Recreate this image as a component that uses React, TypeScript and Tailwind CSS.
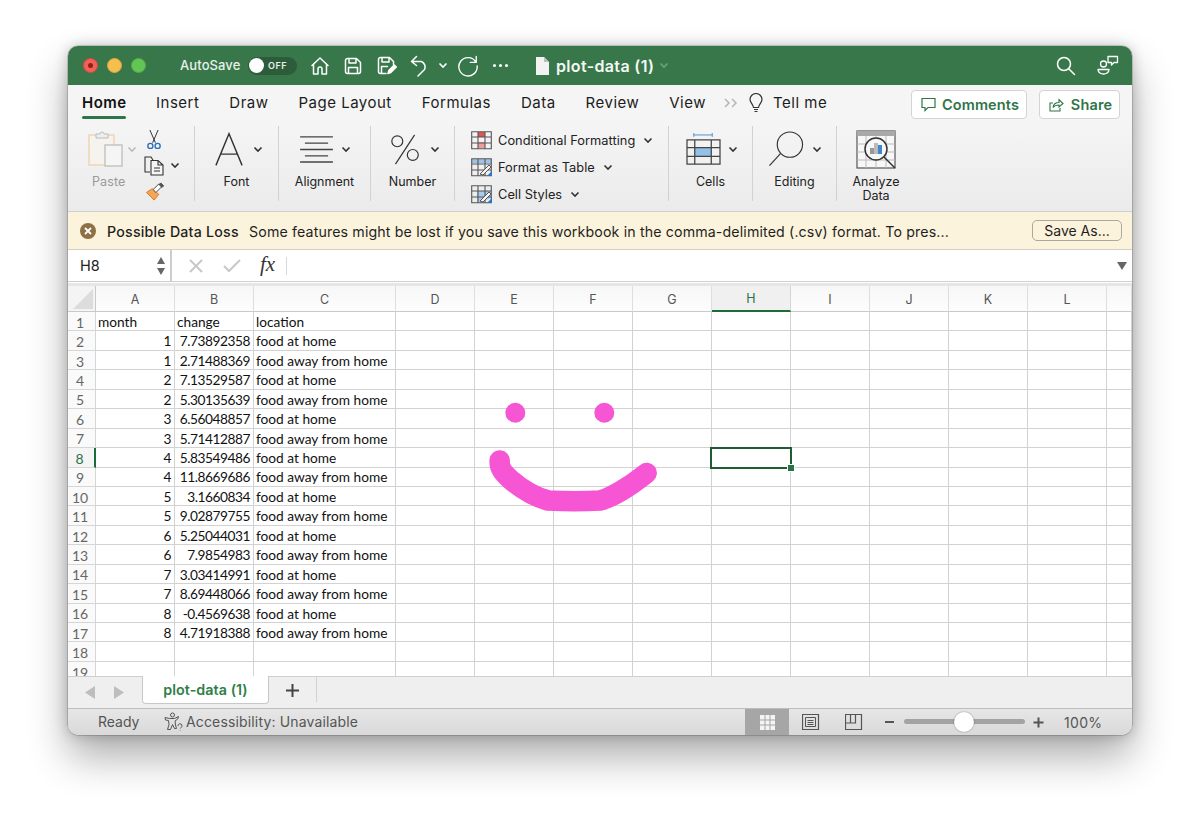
import React from "react";

const UI = "font-['Inter','Liberation_Sans',sans-serif]";
const CELL = "font-['Lato','Open_Sans',sans-serif]";

const Chev = ({ className = "", color = "#333" }: { className?: string; color?: string }) => (
  <svg width="10" height="7" viewBox="0 0 10 7" className={className} fill="none" stroke={color} strokeWidth="1.6">
    <path d="M1.5 1.5 5 5l3.5-3.5" />
  </svg>
);

const W = { fill: "none", stroke: "#fff", strokeWidth: 1.5, strokeLinejoin: "round" as const, strokeLinecap: "round" as const };

function TitleBar() {
  return (
    <div className="h-[39px] shrink-0 bg-[#38774a] flex items-center relative text-white">
      <div className="flex items-center gap-[9px] ml-[15px]">
        <span className="w-[15px] h-[15px] rounded-full bg-[#f2605a] border border-[#d9483f] flex items-center justify-center">
          <span className="w-[5px] h-[5px] rounded-full bg-[#8f1f1a]" />
        </span>
        <span className="w-[15px] h-[15px] rounded-full bg-[#f6bd4f] border border-[#dba53d]" />
        <span className="w-[15px] h-[15px] rounded-full bg-[#62c554] border border-[#52ad45]" />
      </div>
      <span className="ml-[34px] text-[13px] tracking-[0.1px] font-medium text-[#e8f0ea] w-[68px]">AutoSave</span>
      <div className="w-[49px] h-[18px] rounded-full bg-[#2c5c3a] flex items-center relative">
        <span className="w-[15px] h-[15px] ml-[1px] rounded-full bg-white" />
        <span className="ml-[4px] text-[9px] font-semibold tracking-[0.5px] text-[#e8f0ea]">OFF</span>
      </div>
      <svg width="20" height="20" viewBox="0 0 20 20" className="ml-[13px]" {...W}>
        <path d="M2 9.5 10 2l8 7.5M3.5 8.5V18h4.500v-5a2 2 0 0 1 4 0v5h4.500V8.500" />
      </svg>
      <svg width="18" height="18" viewBox="0 0 18 18" className="ml-[14px]" {...W}>
        <path d="M1.500 3.500a2 2 0 0 1 2-2h9l4 4v9a2 2 0 0 1-2 2h-11a2 2 0 0 1-2-2zM5 1.500v4.500h7V1.500M4.500 16.500v-6h9v6" />
      </svg>
      <svg width="20" height="19" viewBox="0 0 20 19" className="ml-[15px]" {...W}>
        <path d="M9 17.500H3.500a2 2 0 0 1-2-2v-12a2 2 0 0 1 2-2h9l4 4v3M5 1.500V6h7V1.500M4.500 17v-6.500h6" />
        <path d="m11 17.500.8-3 5.500-5.500 2 2-5.500 5.500z" fill="#fff" />
      </svg>
      <svg width="20" height="22" viewBox="0 0 20 22" className="ml-[13px]" {...W}>
        <path d="M1.500 6.500h10a6 6 0 0 1 3 8L8 21M6.500 1.500l-5 5 5 4" />
      </svg>
      <Chev className="ml-[8px]" color="#fff" />
      <svg width="22" height="22" viewBox="0 0 24 24" className="ml-[9px]" {...W}>
        <path d="M20.500 7.500A10 10 0 1 0 22 12M21 1.500v6.500h-6.500" />
      </svg>
      <span className="ml-[14px] flex gap-[3px]">
        <i className="w-[3px] h-[3px] rounded-full bg-white" />
        <i className="w-[3px] h-[3px] rounded-full bg-white" />
        <i className="w-[3px] h-[3px] rounded-full bg-white" />
      </span>
      <svg width="14" height="18" viewBox="0 0 14 18" className="ml-[27px]">
        <path d="M1 0h8l5 5v13H1z" fill="#f2f2f2" />
        <path d="M9 0v5h5z" fill="#bdbdbd" />
      </svg>
      <span className="ml-[7px] text-[16px] tracking-[0.35px] font-semibold text-[#f5f8f5]">plot-data (1)</span>
      <Chev className="ml-[5px]" color="#6fa181" />
      <svg width="20" height="20" viewBox="0 0 20 20" className="absolute left-[988px] top-[10px]" {...W}>
        <circle cx="8" cy="8" r="6.500" />
        <path d="m13 13 5.500 5.500" />
      </svg>
      <svg width="22" height="20" viewBox="0 0 22 20" className="absolute left-[1029px] top-[9px]" {...W} strokeWidth="1.300">
        <circle cx="6.500" cy="9" r="3" />
        <path d="M1 14.500h11a5.500 4.500 0 0 1-11 0z" />
        <path d="M11 1.500h9.500v6H17l-2.500 2.500V7.500H11z" />
      </svg>
    </div>
  );
}

function Tabs() {
  const tabs = ["Insert", "Draw", "Page Layout", "Formulas", "Data", "Review", "View"];
  return (
    <div className="h-[35px] shrink-0 bg-[#f5f5f5] flex items-center relative">
      <div className="ml-[14px] flex items-center gap-[30px] text-[15px] text-[#1c1c1c] tracking-[0.5px] pt-[1px]">
        <span className="relative font-semibold text-[#111] w-[44px]">
          Home
          <i className="absolute left-0 right-0 -bottom-[5px] h-[3px] rounded-full bg-[#2f7547]" />
        </span>
        {tabs.map((t) => (
          <span key={t}>{t}</span>
        ))}
      </div>
      <svg width="15" height="10" viewBox="0 0 15 10" className="ml-[18px]" fill="none" stroke="#b5b5b5" strokeWidth="1.500">
        <path d="m1 1 4 4-4 4M8 1l4 4-4 4" />
      </svg>
      <svg width="14" height="20" viewBox="0 0 14 20" className="ml-[10px]" fill="none" stroke="#333" strokeWidth="1.200">
        <path d="M4.500 14.500C4 11 1 9.500 1 6.500a6 6 0 0 1 12 0c0 3-3 4.500-3.500 8zM5 16.500h4M5.500 18.500h3" />
      </svg>
      <span className="ml-[10px] pt-[1px] text-[15px] tracking-[0.5px] text-[#1c1c1c]">Tell me</span>
      <div className="absolute left-[843px] top-[5px] w-[116px] h-[29px] pl-[2px] bg-white border border-[#d4d4d4] rounded-[4px] flex items-center justify-center gap-[6px] text-[#2f7547] text-[14.500px] tracking-[0.15px] font-semibold">
        <svg width="15" height="15" viewBox="0 0 15 15" fill="none" stroke="#2f7547" strokeWidth="1.200">
          <path d="M1 1.500h13v9H7l-3 3v-3H1z" />
        </svg>
        Comments
      </div>
      <div className="absolute left-[971px] top-[5px] w-[81px] h-[29px] pl-[2px] bg-white border border-[#d4d4d4] rounded-[4px] flex items-center justify-center gap-[7px] text-[#2f7547] text-[14.500px] tracking-[0.15px] font-semibold">
        <svg width="15" height="15" viewBox="0 0 15 15" fill="none" stroke="#2f7547" strokeWidth="1.100">
          <path d="M4 6H1v8h10v-3M4 10.500c.5-3.500 3-5 6-5V2.500L14 6.500l-4 3.500V8c-2.500 0-4.500.5-6 2.500z" />
        </svg>
        Share
      </div>
    </div>
  );
}

function Group({ w, label, icon, iconCls }: { w: number; label: string; icon: React.ReactNode; iconCls: string }) {
  return (
    <div style={{ width: w }} className="h-[75px] shrink-0 border-r border-[#d2d2d2] flex flex-col items-center">
      <div className={`h-[44px] mt-[1px] flex items-center ${iconCls}`}>
        {icon}
        <Chev className="shrink-0" />
      </div>
      <div className="mt-[4px] text-[12.500px] leading-[14px] text-[#222] text-center">{label}</div>
    </div>
  );
}

function CfIcon({ kind }: { kind: number }) {
  return (
    <svg width="21" height="19" viewBox="0 0 21 19" fill="none" className="shrink-0">
      {kind === 0 && (
        <>
          <rect x="7" y="1" width="7" height="5" fill="#e0574f" />
          <rect x="7" y="11" width="7" height="6" fill="#ee9d9a" />
        </>
      )}
      {kind === 1 && <path d="M1 1h19v4H1z" fill="#9cc3ea" />}
      {kind === 2 && <path d="M6 6h14v7L11 17H6z" fill="#a8cbee" />}
      <path d="M.7.700h19.600v17H.7zM.7 6h19.600M.7 12h19.600M7 .7v17M14 .7v17" stroke="#555" strokeWidth="1.100" />
      {kind > 0 && (
        <>
          <path d="m9 16 9-9 2 2-8 8z" fill="#f5f5f5" stroke="#555" />
          <path d="m16 18 5-5v5z" fill="#2a73c5" />
        </>
      )}
    </svg>
  );
}

function Ribbon() {
  return (
    <div className="h-[92px] shrink-0 bg-gradient-to-b from-[#f5f5f5] to-[#ebebeb] border-b border-[#cfcfcf] flex items-start pt-[6px] text-[#222]">
      {/* Clipboard */}
      <div className="w-[127px] h-[75px] shrink-0 border-r border-[#d2d2d2] flex">
        <div className="ml-[20px] w-[57px] flex flex-col">
          <div className="h-[44px] mt-[1px] flex items-center">
            <svg width="36" height="38" viewBox="0 0 36 38" fill="none">
              <path d="M1 5h25v30H1z" stroke="#f0dcc2" strokeWidth="2" fill="#f6f3ee" />
              <path d="M8 8V4h4a2 2 0 0 1 4 0h4v4z" fill="#eee" stroke="#bbb" />
              <rect x="17" y="15" width="17" height="21" fill="#f5f5f5" stroke="#c4c4c4" strokeWidth="1.500" />
            </svg>
            <Chev className="ml-[3px]" color="#bbb" />
          </div>
          <span className="ml-[4px] mt-[4px] text-[12.500px] tracking-[0.1px] leading-[14px] text-[#9a9a9a]">Paste</span>
        </div>
        <div className="flex flex-col items-start ml-[-1px] mt-[4px] gap-[6px]">
          <svg width="16" height="21" viewBox="0 0 16 22" fill="none" className="ml-[2px]">
            <path d="M3.500 0 9.500 14M12.500 0 6.500 14" stroke="#333" strokeWidth="1.100" />
            <circle cx="4" cy="17.500" r="2.800" stroke="#2a6fbd" strokeWidth="1.500" />
            <circle cx="12" cy="17.500" r="2.800" stroke="#2a6fbd" strokeWidth="1.500" />
          </svg>
          <div className="flex items-center">
            <svg width="21" height="20" viewBox="0 0 21 20" fill="none" stroke="#333" strokeWidth="1.100">
              <path d="M6 16H1V1h6l2 3" />
              <path d="M7 4.500h7l5 4.500v10H7zM14 4.500V9h5M10 12h6M10 15h6" fill="#f5f5f5" />
            </svg>
            <Chev className="ml-[5px]" />
          </div>
          <svg width="21" height="20" viewBox="0 0 21 20" fill="none" className="ml-[1px]">
            <path d="m1 11 8 8 5-6-7-6z" fill="#f2a65a" stroke="#d9791f" />
            <path d="m8 8 3 3 6-6-3-3z" fill="#fff" stroke="#444" />
            <path d="m14 3 2-2 3 3-2 2" fill="#555" stroke="#444" />
          </svg>
        </div>
      </div>
      <Group
        w={84}
        label="Font"
        iconCls="ml-[4px]"
        icon={
          <svg width="28" height="35" viewBox="0 0 30 36" className="mr-[10px]" fill="none" stroke="#333" strokeWidth="1.500">
            <path d="M1 35 15 1l14 34M6 23h18" />
          </svg>
        }
      />
      <Group
        w={92}
        label="Alignment"
        iconCls="ml-[1px]"
        icon={
          <svg width="35" height="27" viewBox="0 0 36 28" className="mr-[7px]" fill="none" stroke="#444" strokeWidth="1.300">
            <path d="M1 1h34M6 7.500h24M1 14h34M6 20.500h24" />
            <path d="M1 27h34" strokeWidth="1.600" />
          </svg>
        }
      />
      <Group
        w={84}
        label="Number"
        iconCls="ml-[4px]"
        icon={
          <svg width="31" height="31" viewBox="0 0 34 34" className="mr-[9px]" fill="none" stroke="#333" strokeWidth="1.300">
            <circle cx="8" cy="8" r="6" />
            <circle cx="25" cy="23" r="6" />
            <path d="M27 1 6 33" />
          </svg>
        }
      />
      {/* Styles */}
      <div className="w-[214px] h-[75px] shrink-0 border-r border-[#d2d2d2] flex flex-col pl-[16px] pt-[5px] gap-[8px] text-[12.800px] leading-[19px] tracking-[0.03px]">
        {["Conditional Formatting", "Format as Table", "Cell Styles"].map((t, i) => (
          <div key={t} className="flex items-center h-[19px]">
            <CfIcon kind={i} />
            <span className="ml-[6px] mr-[8px]">{t}</span>
            <Chev />
          </div>
        ))}
      </div>
      <Group
        w={84}
        label="Cells"
        iconCls="ml-[2px]"
        icon={
          <svg width="35" height="33" viewBox="0 0 36 34" className="mr-[7px]" fill="none">
            <path d="M8 2h19M8 0v4M27 0v4" stroke="#4a8fd0" />
            <rect x="9" y="15" width="17" height="9" fill="#93c1ea" />
            <path d="M1 7h34v25H1zM1 15h34M1 24h34M9 7v25M26 7v25" stroke="#444" strokeWidth="1.300" />
          </svg>
        }
      />
      <Group
        w={84}
        label="Editing"
        iconCls="ml-[1px]"
        icon={
          <svg width="37" height="36" viewBox="0 0 37 37" className="mr-[7px]" fill="none" stroke="#333" strokeWidth="1.200">
            <circle cx="22" cy="14" r="13" />
            <path d="M12.500 23 1 35.500" />
          </svg>
        }
      />
      <div className="w-[78px] shrink-0 flex flex-col items-center">
        <svg width="40" height="40" viewBox="0 0 40 40" fill="none" className="mt-[4px]">
          <rect x="1" y="1" width="38" height="37" fill="#f7f7f7" stroke="#555" strokeWidth="1.200" />
          <rect x="1" y="1" width="38" height="5" fill="#a9a9a9" />
          <path d="M1 14h38M1 22h38M1 30h38M10 6v32M20 6v32M30 6v32" stroke="#bbb" />
          <circle cx="20" cy="19" r="11" fill="#f7f7f7" stroke="#333" strokeWidth="1.500" />
          <rect x="14" y="18" width="4" height="6" fill="#999" />
          <rect x="18" y="13" width="4" height="11" fill="#bbb" />
          <rect x="22" y="15" width="4" height="9" fill="#3f87d0" />
          <path d="m28 27 11 11" stroke="#333" strokeWidth="1.500" />
        </svg>
        <div className="mt-[5px] text-[12.500px] leading-[14px] text-center">
          Analyze
          <br />
          Data
        </div>
      </div>
    </div>
  );
}

function Banner() {
  return (
    <div className="h-[38px] shrink-0 bg-[#fcf3dc] border-b border-[#d3cfc2] flex items-center text-[14.200px] text-[#1f1f1f]">
      <span className="ml-[12px] w-[16px] h-[16px] rounded-full bg-[#8d7046] flex items-center justify-center">
        <svg width="8" height="8" viewBox="0 0 8 8" stroke="#fff" strokeWidth="1.800">
          <path d="m1 1 6 6M7 1 1 7" />
        </svg>
      </span>
      <span className="ml-[11px] mt-[2px] w-[132px] font-medium whitespace-nowrap tracking-[0.22px]">Possible Data Loss</span>
      <span className="ml-[10px] mt-[2px] w-[703px] whitespace-nowrap tracking-[0.14px]">
        Some features might be lost if you save this workbook in the comma-delimited (.csv) format. To pres...
      </span>
      <span className="ml-[80px] w-[90px] h-[21px] border border-[#aba89c] rounded-[5px] flex items-center justify-center text-[14px]">
        Save As...
      </span>
    </div>
  );
}

function FormulaBar() {
  return (
    <div className="h-[36px] shrink-0 border-b-[3px] border-[#e6e6e6] bg-white flex items-start">
      <div className="h-[32px] w-[104px] shrink-0 border-r-2 border-b border-[#cdcdcd] flex items-center relative text-[14.500px] text-[#222]">
        <span className="ml-[12px]">H8</span>
        <svg width="10" height="20" viewBox="0 0 10 20" className="absolute right-[4px] top-[6px]" fill="#666">
          <path d="M5 1 9 8H1zM5 19 1 12h8z" />
        </svg>
      </div>
      <div className="flex-1 h-[32px] border-b border-[#cfcfcf] flex items-center relative">
        <svg width="14" height="14" viewBox="0 0 14 14" className="ml-[17px]" fill="none" stroke="#c8c8c8" strokeWidth="2">
          <path d="m1 1 12 12M13 1 1 13" />
        </svg>
        <svg width="18" height="14" viewBox="0 0 18 14" className="ml-[20px]" fill="none" stroke="#c8c8c8" strokeWidth="2">
          <path d="m1 7 5 5L17 1" />
        </svg>
        <span className="ml-[19px] text-[21px] leading-none italic text-[#333] font-['Liberation_Serif',serif] -mt-[2px]">fx</span>
        <span className="ml-[11px] w-px h-[18px] bg-[#d8d8d8]" />
        <svg width="10" height="8" viewBox="0 0 10 8" className="absolute right-[5px] top-[12px]" fill="#666">
          <path d="M0 0h10L5 8z" />
        </svg>
      </div>
    </div>
  );
}

const DATA: [string, string, string][] = [
  ["month", "change", "location"],
  ["1", "7.73892358", "food at home"],
  ["1", "2.71488369", "food away from home"],
  ["2", "7.13529587", "food at home"],
  ["2", "5.30135639", "food away from home"],
  ["3", "6.56048857", "food at home"],
  ["3", "5.71412887", "food away from home"],
  ["4", "5.83549486", "food at home"],
  ["4", "11.8669686", "food away from home"],
  ["5", "3.1660834", "food at home"],
  ["5", "9.02879755", "food away from home"],
  ["6", "5.25044031", "food at home"],
  ["6", "7.9854983", "food away from home"],
  ["7", "3.03414991", "food at home"],
  ["7", "8.69448066", "food away from home"],
  ["8", "-0.4569638", "food at home"],
  ["8", "4.71918388", "food away from home"],
];
const COLS = ["A", "B", "C", "D", "E", "F", "G", "H", "I", "J", "K", "L", ""];
const LINE = "border-r border-b border-[#d2d2d2]";

function Sheet() {
  const rows = Array.from({ length: 19 }, (_, i) => i);
  return (
    <div className="h-[390px] shrink-0 relative overflow-hidden bg-white">
      <div className={`grid grid-cols-[28px_79px_79px_142px_repeat(9,79px)_25px] grid-rows-[26px_repeat(19,19.44px)] ${CELL} text-[13.700px] text-[#111]`}>
        <div className="border-r border-b border-[#c9c9c9] bg-[#f4f4f4] relative">
          <svg width="20" height="20" viewBox="0 0 20 20" className="absolute right-[2px] bottom-[2px]">
            <path d="M20 0v20H0z" fill="#dcdcdc" />
          </svg>
        </div>
        {COLS.map((c) => (
          <div
            key={c || "end"}
            className={
              c === "H"
                ? `flex items-center justify-center pt-[3px] bg-[#f0f0f0] border-r border-[#d6d6d6] border-b-2 border-b-[#1e6b3a] text-[#2a7147] ${UI} text-[12.500px]`
                : `flex items-center justify-center pt-[3px] bg-gradient-to-b from-[#f7f7f7] to-[#fdfdfd] border-r border-b border-r-[#dedede] border-b-[#c9c9c9] text-[#555] ${UI} text-[12.500px]`
            }
          >
            {c}
          </div>
        ))}
        {rows.map((r) => {
          const d = DATA[r];
          const num = r === 0 ? "justify-start pl-[2px]" : "justify-end pr-[3px] tracking-[-0.45px]";
          return (
            <React.Fragment key={r}>
              <div
                className={
                  r === 7
                    ? "flex items-center justify-center pt-[2px] bg-[#f5f5f5] border-b border-[#d6d6d6] border-r-2 border-r-[#1e6b3a] text-[#2a7147] text-[14px] pr-[3px]"
                    : "flex items-center justify-center pt-[2px] bg-[#fafafa] border-b border-r border-[#d6d6d6] text-[#666] text-[14px] pr-[3px]"
                }
              >
                {r + 1}
              </div>
              <div className={`${LINE} flex items-center pt-[2px] ${num} whitespace-nowrap`}>{d?.[0]}</div>
              <div className={`${LINE} flex items-center pt-[2px] ${num} whitespace-nowrap`}>{d?.[1]}</div>
              <div className={`${LINE} flex items-center pt-[2px] px-[2px] whitespace-nowrap`}>{d?.[2]}</div>
              {COLS.slice(3).map((c) => (
                <div key={c || "end"} className={LINE} />
              ))}
            </React.Fragment>
          );
        })}
      </div>
      {/* drawing overlay */}
      <svg className="absolute inset-0" width="1064" height="390" viewBox="68 286 1064 390" fill="none">
        <circle cx="515.300" cy="412.700" r="10" fill="#f655d3" />
        <circle cx="604.300" cy="412.700" r="10" fill="#f655d3" />
        <path
          d="M499.700 460.500C499 468 503 473 511 480 524 491 535 497 548 500.500 565 501.500 585 501.500 600 500.500 610 498 628 488 646.700 473"
          stroke="#f655d3"
          strokeWidth="20.500"
          strokeLinecap="round"
          strokeLinejoin="round"
        />
      </svg>
      {/* selection */}
      <div className="absolute left-[642px] top-[161px] w-[82px] h-[22px] border-2 border-[#1f5c32]">
        <i className="absolute -right-[4px] -bottom-[4px] w-[6px] h-[6px] bg-[#2a7147] outline outline-1 outline-white" />
      </div>
    </div>
  );
}

function SheetTabs() {
  return (
    <div className="h-[32px] shrink-0 bg-[#efefef] border-t border-[#cfcfcf] flex items-start relative">
      <svg width="10" height="13" viewBox="0 0 10 13" className="ml-[17px] mt-[9px]" fill="#bdbdbd">
        <path d="M10 0v13L0 6.500z" />
      </svg>
      <svg width="10" height="13" viewBox="0 0 10 13" className="ml-[19px] mt-[9px]" fill="#bdbdbd">
        <path d="M0 0v13l10-6.500z" />
      </svg>
      <div className="ml-[18px] -mt-[1px] w-[127px] h-[28px] bg-white rounded-b-[4px] border-x border-b border-[#c8c8c8] flex items-center justify-center text-[14.300px] tracking-[0.05px] font-semibold text-[#2f8048]">
        plot-data (1)
      </div>
      <svg width="13" height="13" viewBox="0 0 13 13" className="ml-[17px] mt-[7px]" stroke="#444" strokeWidth="2">
        <path d="M6.500 0v13M0 6.500h13" />
      </svg>
      <span className="ml-[17px] w-px h-[25px] bg-[#d2d2d2]" />
    </div>
  );
}

function StatusBar() {
  return (
    <div className="h-[27px] shrink-0 bg-gradient-to-b from-[#e6e6e6] to-[#d9d9d9] border-t border-[#bdbdbd] flex items-center text-[14px] text-[#555] relative">
      <span className="ml-[30px] w-[66px] -mt-[1px]">Ready</span>
      <svg width="19" height="20" viewBox="0 0 19 20" fill="none" stroke="#555" strokeWidth="1">
        <circle cx="8.500" cy="3" r="2" />
        <path d="M1 5.500 5.500 6.500h5l4-2-.8 2.500-2.700 2 .5 4 1 3.500h-2l-2-4-2 5H3.500l1.500-5-.5-4L1.500 8z" />
        <path d="M14 14a2 2 0 1 1 3 1.500l-.8 1M16.200 18.500v.5" />
      </svg>
      <span className="ml-[3px] -mt-[1px] tracking-[0.15px]">Accessibility: Unavailable</span>
      <div className="absolute left-[677px] top-0 h-[26px] w-[44px] bg-[#a6a6a6] flex items-center justify-center">
        <svg width="17" height="17" viewBox="0 0 17 17">
          <path d="M1 1h15v15H1z" fill="#f4f4f4" />
          <path d="M1 6h15M1 11h15M6 1v15M11 1v15" stroke="#a6a6a6" />
        </svg>
      </div>
      <svg width="18" height="17" viewBox="0 0 18 17" className="absolute left-[734px] top-[5px]" fill="none" stroke="#555">
        <path d="M.5.500h16v15H.5z" strokeWidth="1.200" />
        <path d="M3.500 3.500h10v9h-10zM5.500 6.500h6M5.500 8.500h6M5.500 10.500h6" />
      </svg>
      <svg width="18" height="17" viewBox="0 0 18 17" className="absolute left-[777px] top-[5px]" fill="none" stroke="#555" strokeWidth="1.200">
        <path d="M.5.500h16v15H.5zM.5 9h10V.5M5.500.5V9" />
      </svg>
      <i className="absolute left-[817px] top-[12px] w-[9px] h-[2px] bg-[#555]" />
      <div className="absolute left-[836px] top-[10px] w-[121px] h-[5px] rounded-full bg-[#a3a3a3]" />
      <div className="absolute left-[886px] top-[3px] w-[20px] h-[20px] rounded-full bg-white shadow-[0_0_2px_rgba(0,0,0,0.4)]" />
      <svg width="11" height="11" viewBox="0 0 11 11" className="absolute left-[965px] top-[8px]" stroke="#555" strokeWidth="2">
        <path d="M5.500.5v10M.5 5.500h10" />
      </svg>
      <span className="absolute left-[996px] top-[3px] text-[14px] tracking-[0.3px]">100%</span>
    </div>
  );
}

export default function App() {
  return (
    <div className={`w-[1200px] h-[825px] bg-white pt-[46px] pl-[68px] overflow-hidden ${UI}`}>
      <div className="w-[1064px] h-[689px] rounded-[10px] overflow-hidden flex flex-col bg-[#efefef] shadow-[0_22px_40px_rgba(0,0,0,0.32),0_0_14px_rgba(0,0,0,0.22),0_0_0_0.5px_rgba(0,0,0,0.3)]">
        <TitleBar />
        <Tabs />
        <Ribbon />
        <Banner />
        <FormulaBar />
        <Sheet />
        <SheetTabs />
        <StatusBar />
      </div>
    </div>
  );
}
